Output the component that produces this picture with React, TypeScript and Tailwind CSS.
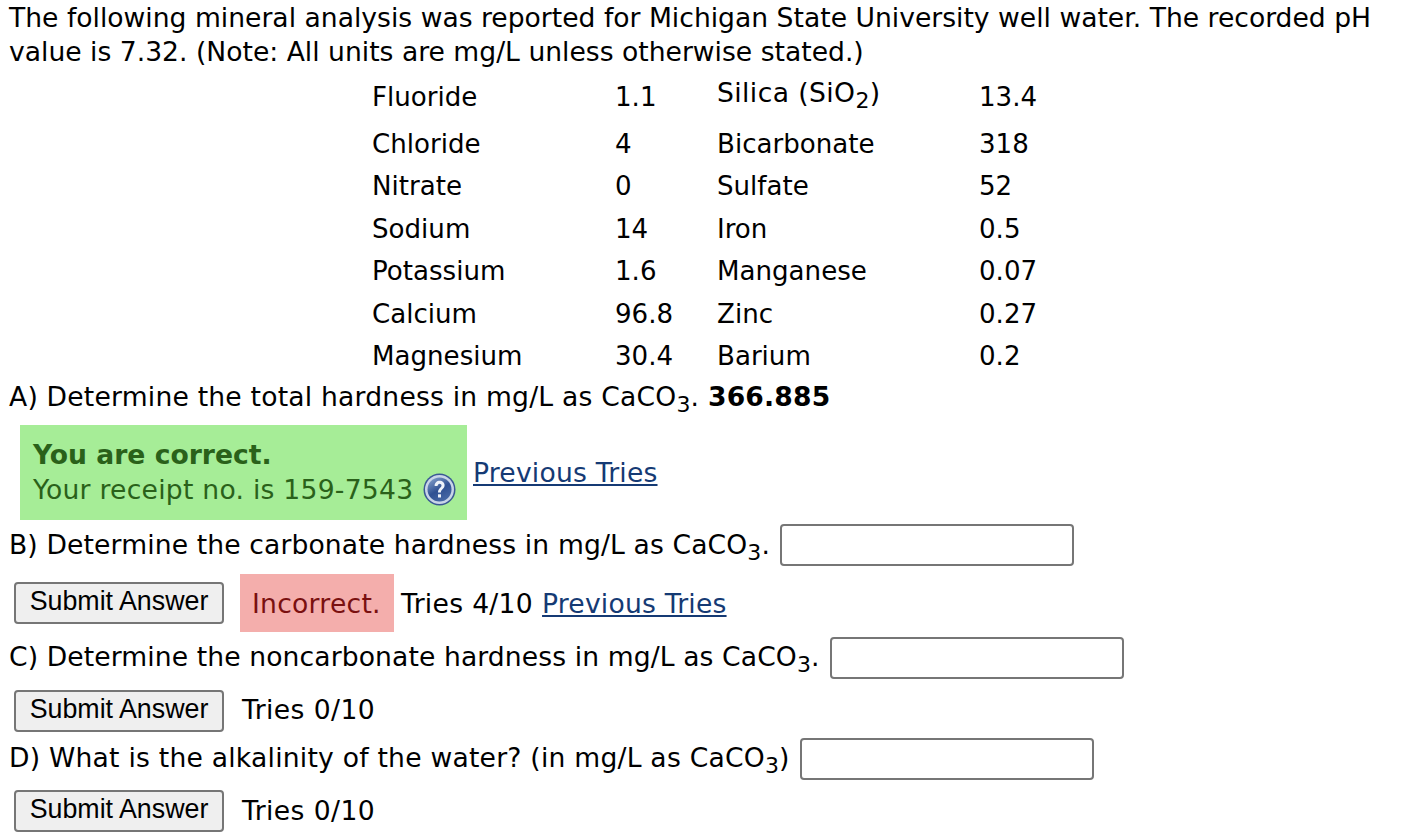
const ROWS = [
  ['Fluoride', '1.1', 'Silica', '13.4'],
  ['Chloride', '4', 'Bicarbonate', '318'],
  ['Nitrate', '0', 'Sulfate', '52'],
  ['Sodium', '14', 'Iron', '0.5'],
  ['Potassium', '1.6', 'Manganese', '0.07'],
  ['Calcium', '96.8', 'Zinc', '0.27'],
  ['Magnesium', '30.4', 'Barium', '0.2'],
]

function Sub({ n }: { n: string }) {
  return <span className="relative top-[6px] text-[22px] leading-none">{n}</span>
}

function HelpIcon() {
  return (
    <svg width="33" height="33" viewBox="0 0 33 33" className="shrink-0">
      <defs>
        <linearGradient id="helpFill" x1="0.2" y1="0" x2="0.8" y2="1">
          <stop offset="0" stopColor="#7f9bc8" />
          <stop offset="0.5" stopColor="#2f5092" />
          <stop offset="1" stopColor="#4a6ba8" />
        </linearGradient>
      </defs>
      <circle cx="16.5" cy="16.5" r="16" fill="#3a5894" />
      <circle cx="16.5" cy="16.5" r="14.5" fill="#c9d5e8" />
      <circle cx="16.5" cy="16.5" r="12" fill="url(#helpFill)" />
      <path d="M11.6 13c0-3.2 2.2-5.2 5-5.2s5 1.8 5 4.5c0 3.7-3.7 3.9-3.7 7.2h-2.9c0-4.4 3.5-4.6 3.5-7 0-1.1-.8-1.8-1.9-1.8s-2 .9-2.1 2.4z" fill="#eef2f9" />
      <rect x="15" y="21.3" width="3" height="3.2" fill="#eef2f9" />
    </svg>
  )
}

function SubmitButton() {
  return (
    <button className="h-[42px] w-[210px] rounded-[4px] border-2 border-[#767676] bg-[#efefef] pb-[2px] font-['Liberation_Sans',sans-serif] text-[26.8px] leading-none text-black">
      Submit Answer
    </button>
  )
}

function AnswerBox() {
  return <input type="text" className="h-[42px] w-[294px] rounded-[4px] border-2 border-[#767676] bg-white" />
}

export default function App() {
  return (
    <div className="h-[840px] w-[1414px] overflow-hidden bg-white pl-[9px] pt-[1px] font-['DejaVu_Sans',sans-serif] text-[26.6px] leading-[34px] text-black">
      <p className="w-[1390px]">
        The following mineral analysis was reported for Michigan State University well water. The recorded pH value is 7.32. (Note: All units are mg/L unless otherwise stated.)
      </p>

      <div className="ml-[363px] mt-[3px] grid grid-cols-[243px_102px_262px_100px] text-[26.1px]">
        {ROWS.map((row, i) => (
          <div key={row[0]} className={`col-span-4 grid grid-cols-subgrid items-center ${i === 0 ? 'h-[50.5px]' : 'h-[42.5px]'}`}>
            <div>{row[0]}</div>
            <div>{row[1]}</div>
            {i === 0 ? (
              <div className="relative top-[-4px] text-[26.6px] tracking-[0.4px]">
                Silica (SiO<Sub n="2" />)
              </div>
            ) : (
              <div>{row[2]}</div>
            )}
            <div>{row[3]}</div>
          </div>
        ))}
      </div>

      <div className="mt-[2px] h-[34px] tracking-[0.2px]">
        A) Determine the total hardness in mg/L as CaCO<Sub n="3" />. <b>366.885</b>
      </div>

      <div className="ml-[11px] mt-[11px] flex items-center">
        <div className="h-[95px] w-[447px] bg-[#a6ed97] pl-[13px] pt-[13px] text-[#2a611a]">
          <div className="font-bold">You are correct.</div>
          <div className="mt-[1px] flex items-center gap-[10px] tracking-[0.25px]">
            Your receipt no. is 159-7543
            <HelpIcon />
          </div>
        </div>
        <a href="#" className="relative top-[1px] ml-[6px] tracking-[0.2px] text-[#153a74] underline">Previous Tries</a>
      </div>

      <div className="mt-[4px] flex h-[42px] items-center gap-[10px] tracking-[0.12px]">
        <span>
          B) Determine the carbonate hardness in mg/L as CaCO<Sub n="3" />.
        </span>
        <AnswerBox />
      </div>

      <div className="ml-[5px] mt-[8px] flex items-center">
        <SubmitButton />
        <div className="ml-[16px] flex h-[58px] w-[154px] items-center bg-[#f4aeac] pl-[12px] pt-[2px] tracking-[0.25px] text-[#7a1010]">Incorrect.</div>
        <span className="relative top-[1px] ml-[7px] tracking-[0.3px]">Tries 4/10</span>
        <a href="#" className="relative top-[1px] ml-[9px] tracking-[0.2px] text-[#153a74] underline">Previous Tries</a>
      </div>

      <div className="mt-[5px] flex h-[42px] items-center gap-[10px] tracking-[0.1px]">
        <span className="relative top-[-1px]">
          C) Determine the noncarbonate hardness in mg/L as CaCO<Sub n="3" />.
        </span>
        <AnswerBox />
      </div>

      <div className="ml-[5px] mt-[11px] flex items-center">
        <SubmitButton />
        <span className="relative top-[-1px] ml-[18px] tracking-[0.4px]">Tries 0/10</span>
      </div>

      <div className="mt-[6px] flex h-[42px] items-center gap-[10px] tracking-[0.22px]">
        <span className="relative top-[-1px]">
          D) What is the alkalinity of the water? (in mg/L as CaCO<Sub n="3" />)
        </span>
        <AnswerBox />
      </div>

      <div className="ml-[5px] mt-[10px] flex items-center">
        <SubmitButton />
        <span className="ml-[18px] tracking-[0.4px]">Tries 0/10</span>
      </div>
    </div>
  )
}
